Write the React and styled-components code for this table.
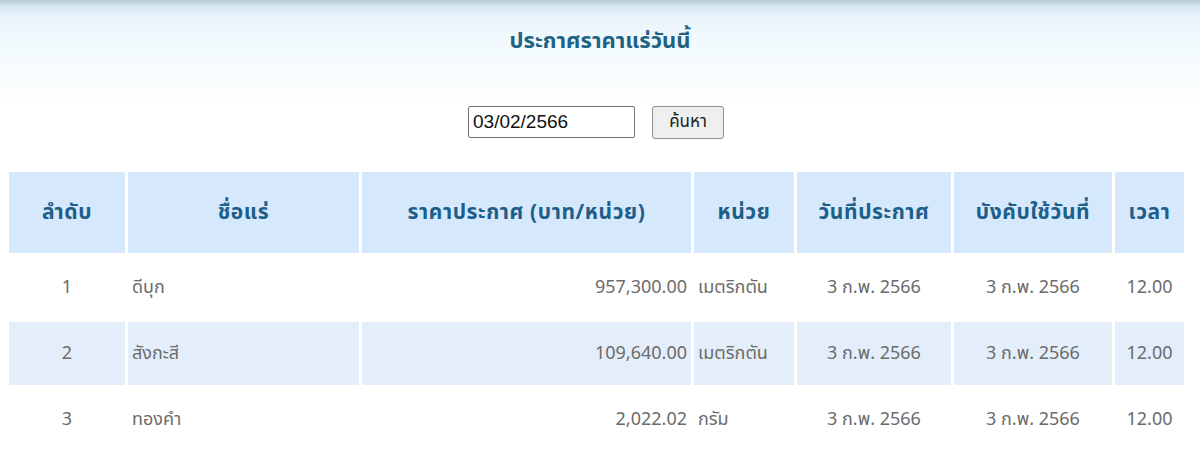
import React from 'react';
import styled, {createGlobalStyle} from 'styled-components';

const GlobalStyle = createGlobalStyle`
    html, body {
        margin: 0;
        padding: 0;
        background: #fff;
    }
    body {
        font-family: Tahoma, "Noto Sans Thai", "Noto Sans", "Liberation Sans", sans-serif;
    }
`

const Page = styled.div`
    width: 1200px;
    height: 468px;
    overflow: hidden;
    background: linear-gradient(to bottom, #b9c9d5 0px, #d6e6f0 6px, #e9f5fb 16px, #f3fafd 50px, #ffffff 105px);
`

const Title = styled.h2`
    margin: 0;
    padding-top: 25px;
    height: 80px;
    box-sizing: border-box;
    text-align: center;
    font-size: 22px;
    font-weight: bold;
    color: #1f6286;
`

const SearchBar = styled.form`
    display: flex;
    justify-content: center;
    align-items: center;
    gap: 17px;
    padding-right: 8px;
    height: 84px;
    box-sizing: border-box;
`

const DateInput = styled.input`
    width: 167px;
    height: 32px;
    box-sizing: border-box;
    border: 1px solid #767676;
    border-radius: 2px;
    padding: 0 4px;
    font-family: "Liberation Sans", Arial, sans-serif;
    font-size: 19px;
    color: #111;
    background: #fff;
`

const SearchButton = styled.button`
    width: 72px;
    height: 33px;
    box-sizing: border-box;
    border: 1px solid #8f8f8f;
    border-radius: 3px;
    background: #efefef;
    font-family: inherit;
    font-size: 17px;
    color: #222;
    padding: 0;
`

const Table = styled.table`
    margin-left: 6px;
    margin-top: 5px;
    border-collapse: separate;
    border-spacing: 3px;
    table-layout: fixed;
`

const Th = styled.th`
    background: #d6e8fb;
    height: 81px;
    padding: 0;
    color: #1d5f8a;
    font-size: 21px;
    letter-spacing: 0.6px;
    font-weight: bold;
    text-align: center;
`

const Td = styled.td`
    height: 63px;
    padding: 0 4px;
    color: #6b6b6b;
    font-size: 18px;
    text-align: ${p => p.$align || 'center'};
    white-space: nowrap;
    background: ${p => p.$shade ? '#e4eefa' : 'transparent'};
`

const cols = [116, 231, 329, 100, 154, 158, 69];

const heads = ['ลำดับ', 'ชื่อแร่', 'ราคาประกาศ (บาท/หน่วย)', 'หน่วย', 'วันที่ประกาศ', 'บังคับใช้วันที่', 'เวลา'];

const rows = [
    {no: 1, name: 'ดีบุก', price: '957,300.00', unit: 'เมตริกตัน'},
    {no: 2, name: 'สังกะสี', price: '109,640.00', unit: 'เมตริกตัน'},
    {no: 3, name: 'ทองคำ', price: '2,022.02', unit: 'กรัม'},
];

export default function App() {
    return (
        <Page>
            <GlobalStyle/>
            <Title>ประกาศราคาแร่วันนี้</Title>
            <SearchBar onSubmit={e => e.preventDefault()}>
                <DateInput type="text" defaultValue="03/02/2566"/>
                <SearchButton type="submit">ค้นหา</SearchButton>
            </SearchBar>
            <Table>
                <colgroup>
                    {cols.map((w, i) => <col key={i} style={{width: w}}/>)}
                </colgroup>
                <thead>
                    <tr>
                        {heads.map(h => <Th key={h}>{h}</Th>)}
                    </tr>
                </thead>
                <tbody>
                    {rows.map((r, i) => {
                        const shade = i % 2 === 1;
                        return (
                            <tr key={r.no}>
                                <Td $shade={shade}>{r.no}</Td>
                                <Td $shade={shade} $align="left">{r.name}</Td>
                                <Td $shade={shade} $align="right">{r.price}</Td>
                                <Td $shade={shade} $align="left">{r.unit}</Td>
                                <Td $shade={shade}>3 ก.พ. 2566</Td>
                                <Td $shade={shade}>3 ก.พ. 2566</Td>
                                <Td $shade={shade}>12.00</Td>
                            </tr>
                        )
                    })}
                </tbody>
            </Table>
        </Page>
    )
}
